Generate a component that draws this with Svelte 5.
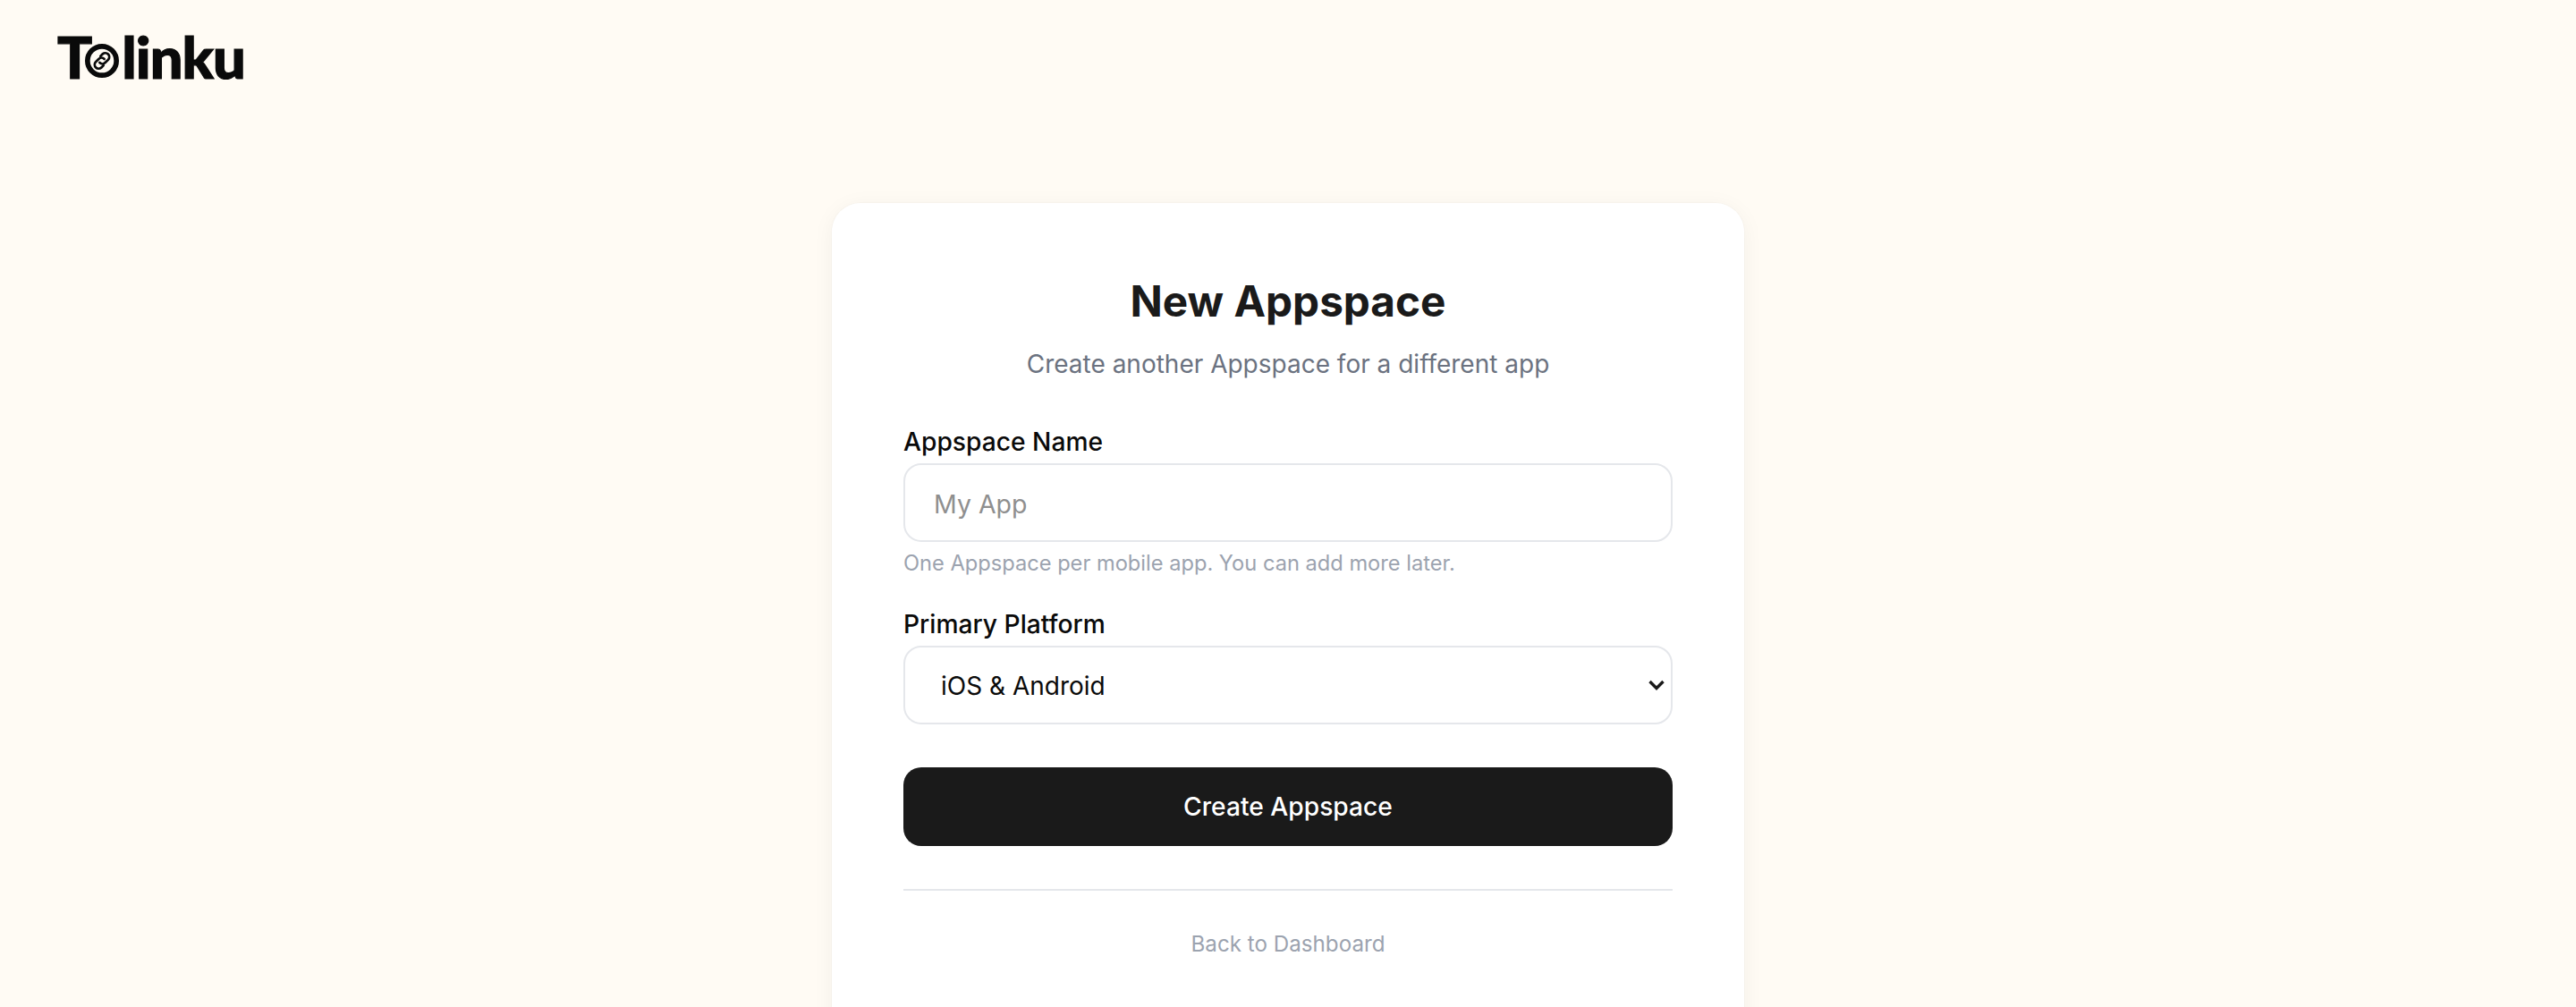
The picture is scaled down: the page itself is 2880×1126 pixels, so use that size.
<script>
    const platforms = ['iOS & Android', 'iOS', 'Android'];
    let name = $state('');
    let platform = $state(platforms[0]);
</script>

<div class="page">
    <header class="top">
        <a class="logo" href="/" aria-label="Tolinku">
            <span class="t">T</span>
            <svg class="logo-ring" viewBox="0 0 40 40" aria-hidden="true">
                <circle cx="20" cy="20" r="17" fill="none" stroke="#0a0a0a" stroke-width="6" />
                <g fill="none" stroke="#0a0a0a" stroke-width="2.4" stroke-linecap="round" transform="translate(20 20) scale(1.2) translate(-20 -20)">
                    <path d="M18.5 15.5l2.2-2.2a3.9 3.9 0 0 1 5.5 5.5l-3 3a3.9 3.9 0 0 1-5.5 0" />
                    <path d="M21.5 24.5l-2.2 2.2a3.9 3.9 0 0 1-5.5-5.5l3-3a3.9 3.9 0 0 1 5.5 0" />
                </g>
            </svg>
            <span class="rest">linku</span>
        </a>
    </header>

    <main class="card">
        <h1>New Appspace</h1>
        <p class="sub">Create another Appspace for a different app</p>

        <form onsubmit={(e) => e.preventDefault()}>
            <label for="name">Appspace Name</label>
            <input id="name" type="text" placeholder="My App" bind:value={name} />
            <p class="hint">One Appspace per mobile app. You can add more later.</p>

            <label for="platform" class="second">Primary Platform</label>
            <div class="select-wrap">
                <select id="platform" bind:value={platform}>
                    {#each platforms as p}
                        <option value={p}>{p}</option>
                    {/each}
                </select>
                <svg class="chevron" viewBox="0 0 18 12" aria-hidden="true">
                    <path d="M1.500 2l7.500 7.500L16.500 2" fill="none" stroke="#1a1a1a" stroke-width="3.4" />
                </svg>
            </div>

            <button type="submit">Create Appspace</button>
        </form>

        <div class="foot">
            <a href="/dashboard">Back to Dashboard</a>
        </div>
    </main>
</div>

<style>
    :global(body) {
        margin: 0;
        background: #fffbf4;
        overflow: hidden;
    }

    .page {
        height: 1126px;
        overflow: hidden;
        font-family: Inter, "Liberation Sans", sans-serif;
        color: #1a1a1a;
    }

    /* ── Logo ── */
    .top {
        padding: 30px 64px 0;
        height: 227px;
        box-sizing: border-box;
    }
    .logo {
        display: inline-flex;
        align-items: center;
        height: 66px;
        font-family: Lato, Inter, sans-serif;
        font-weight: 900;
        font-size: 65px;
        line-height: 1;
        color: #0a0a0a;
        text-decoration: none;
        -webkit-text-stroke: 1.2px #0a0a0a;
    }
    .logo-ring {
        width: 38px;
        height: 38px;
        margin: 9px 0 0 -8px;
    }
    .rest {
        margin-left: 3px;
        letter-spacing: -1px;
    }

    /* ── Card ── */
    .card {
        width: 1020px;
        margin: 0 auto;
        box-sizing: border-box;
        padding: 80px 80px 100px;
        background: #fff;
        border-radius: 32px;
        box-shadow: 0 0 0 1px rgba(0, 0, 0, 0.015), 0 4px 24px rgba(0, 0, 0, 0.05);
    }

    h1 {
        margin: 0;
        text-align: center;
        font-size: 47.700px;
        line-height: 60px;
        font-weight: 700;
    }
    .sub {
        margin: 18px 0 0;
        text-align: center;
        font-size: 28px;
        line-height: 44px;
        color: #6b7280;
    }

    form {
        display: flex;
        flex-direction: column;
        margin-top: 46px;
    }
    label {
        font-size: 28.200px;
        line-height: 38px;
        font-weight: 500;
        color: #0a0a0a;
        margin-bottom: 5px;
    }
    label.second {
        margin-top: 31px;
    }

    input,
    select {
        width: 100%;
        height: 88px;
        box-sizing: border-box;
        background: #fff;
        border: 2px solid #e5e7eb;
        border-radius: 20px;
        font-family: inherit;
        font-size: 28px;
        outline: none;
        color: #0a0a0a;
    }
    input {
        padding: 2px 32px 0;
        font-size: 28.500px;
    }
    input::placeholder {
        color: #8f8f8f;
    }
    select {
        appearance: none;
        padding: 2px 40px 0;
    }

    .select-wrap {
        position: relative;
    }
    .chevron {
        position: absolute;
        right: 9px;
        top: 38px;
        width: 18px;
        height: 12px;
    }

    .hint {
        margin: 6px 0 0;
        font-size: 23.650px;
        line-height: 36px;
        color: #9ca3af;
    }

    button {
        height: 88px;
        margin-top: 48px;
        border: none;
        border-radius: 20px;
        background: #1a1a1a;
        color: #fff;
        font-family: inherit;
        font-size: 28.200px;
        font-weight: 500;
        cursor: pointer;
    }

    .foot {
        margin-top: 48px;
        padding-top: 42px;
        border-top: 2px solid #e5e7eb;
        text-align: center;
        font-size: 24.200px;
        line-height: 36px;
    }
    .foot a {
        color: #9ca3af;
        text-decoration: none;
    }
</style>
